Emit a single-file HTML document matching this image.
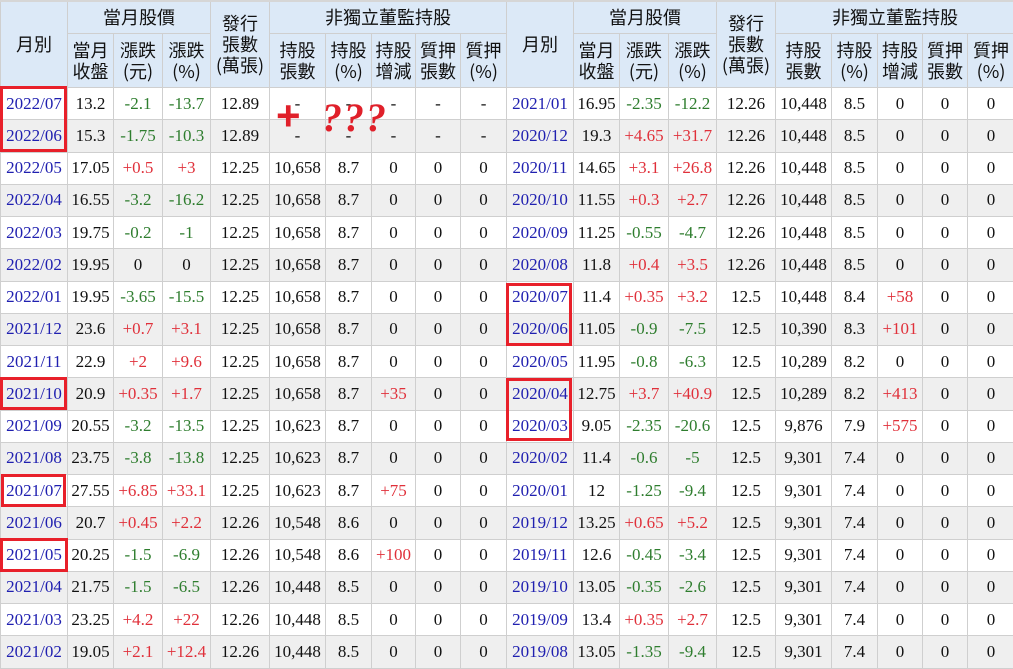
<!DOCTYPE html>
<html><head><meta charset="utf-8"><style>
body{margin:0;width:1013px;height:667px;overflow:hidden;background:#fff;position:relative;font-family:"Liberation Serif","Noto Serif CJK TC",serif;}
table{position:absolute;top:0;border-collapse:collapse;table-layout:fixed;font-size:17px;}
td,th{border:1px solid #cfcfcf;text-align:center;padding:0;white-space:nowrap;overflow:hidden;}
th{background:#dce9f7;font-family:"Noto Sans CJK TC","Noto Sans CJK SC",sans-serif;font-weight:400;font-size:18px;line-height:21px;color:#111;}
tr.h1 th{height:32px;}
tr.h2 th{height:53px;}
tbody tr{height:32.25px;}
tbody tr:nth-child(even) td{background:#efefef;}
td{color:#111;}
td.m{color:#2020b0;}
.g{color:#2e7d2e;}
.r{color:#e0303a;}
.box{position:absolute;border:3px solid #e8202a;box-sizing:border-box;}
.top{position:absolute;top:0;left:0;width:1013px;height:2px;background:#d6d6d6;}
</style></head><body>
<table style="left:0;width:506px">
<colgroup><col style="width:67px"><col style="width:46px"><col style="width:49px"><col style="width:48px"><col style="width:59px"><col style="width:56px"><col style="width:46px"><col style="width:44px"><col style="width:45px"><col style="width:46px"></colgroup>
<thead><tr class="h1"><th rowspan="2">月別</th><th colspan="3">當月股價</th><th rowspan="2">發行<br>張數<br>(萬張)</th><th colspan="5">非獨立董監持股</th></tr>
<tr class="h2"><th>當月<br>收盤</th><th>漲跌<br>(元)</th><th>漲跌<br>(%)</th><th>持股<br>張數</th><th>持股<br>(%)</th><th>持股<br>增減</th><th>質押<br>張數</th><th>質押<br>(%)</th></tr></thead>
<tbody>
<tr><td class="m">2022/07</td><td>13.2</td><td class="g">-2.1</td><td class="g">-13.7</td><td>12.89</td><td>-</td><td>-</td><td>-</td><td>-</td><td>-</td></tr>
<tr><td class="m">2022/06</td><td>15.3</td><td class="g">-1.75</td><td class="g">-10.3</td><td>12.89</td><td>-</td><td>-</td><td>-</td><td>-</td><td>-</td></tr>
<tr><td class="m">2022/05</td><td>17.05</td><td class="r">+0.5</td><td class="r">+3</td><td>12.25</td><td>10,658</td><td>8.7</td><td>0</td><td>0</td><td>0</td></tr>
<tr><td class="m">2022/04</td><td>16.55</td><td class="g">-3.2</td><td class="g">-16.2</td><td>12.25</td><td>10,658</td><td>8.7</td><td>0</td><td>0</td><td>0</td></tr>
<tr><td class="m">2022/03</td><td>19.75</td><td class="g">-0.2</td><td class="g">-1</td><td>12.25</td><td>10,658</td><td>8.7</td><td>0</td><td>0</td><td>0</td></tr>
<tr><td class="m">2022/02</td><td>19.95</td><td>0</td><td>0</td><td>12.25</td><td>10,658</td><td>8.7</td><td>0</td><td>0</td><td>0</td></tr>
<tr><td class="m">2022/01</td><td>19.95</td><td class="g">-3.65</td><td class="g">-15.5</td><td>12.25</td><td>10,658</td><td>8.7</td><td>0</td><td>0</td><td>0</td></tr>
<tr><td class="m">2021/12</td><td>23.6</td><td class="r">+0.7</td><td class="r">+3.1</td><td>12.25</td><td>10,658</td><td>8.7</td><td>0</td><td>0</td><td>0</td></tr>
<tr><td class="m">2021/11</td><td>22.9</td><td class="r">+2</td><td class="r">+9.6</td><td>12.25</td><td>10,658</td><td>8.7</td><td>0</td><td>0</td><td>0</td></tr>
<tr><td class="m">2021/10</td><td>20.9</td><td class="r">+0.35</td><td class="r">+1.7</td><td>12.25</td><td>10,658</td><td>8.7</td><td class="r">+35</td><td>0</td><td>0</td></tr>
<tr><td class="m">2021/09</td><td>20.55</td><td class="g">-3.2</td><td class="g">-13.5</td><td>12.25</td><td>10,623</td><td>8.7</td><td>0</td><td>0</td><td>0</td></tr>
<tr><td class="m">2021/08</td><td>23.75</td><td class="g">-3.8</td><td class="g">-13.8</td><td>12.25</td><td>10,623</td><td>8.7</td><td>0</td><td>0</td><td>0</td></tr>
<tr><td class="m">2021/07</td><td>27.55</td><td class="r">+6.85</td><td class="r">+33.1</td><td>12.25</td><td>10,623</td><td>8.7</td><td class="r">+75</td><td>0</td><td>0</td></tr>
<tr><td class="m">2021/06</td><td>20.7</td><td class="r">+0.45</td><td class="r">+2.2</td><td>12.26</td><td>10,548</td><td>8.6</td><td>0</td><td>0</td><td>0</td></tr>
<tr><td class="m">2021/05</td><td>20.25</td><td class="g">-1.5</td><td class="g">-6.9</td><td>12.26</td><td>10,548</td><td>8.6</td><td class="r">+100</td><td>0</td><td>0</td></tr>
<tr><td class="m">2021/04</td><td>21.75</td><td class="g">-1.5</td><td class="g">-6.5</td><td>12.26</td><td>10,448</td><td>8.5</td><td>0</td><td>0</td><td>0</td></tr>
<tr><td class="m">2021/03</td><td>23.25</td><td class="r">+4.2</td><td class="r">+22</td><td>12.26</td><td>10,448</td><td>8.5</td><td>0</td><td>0</td><td>0</td></tr>
<tr><td class="m">2021/02</td><td>19.05</td><td class="r">+2.1</td><td class="r">+12.4</td><td>12.26</td><td>10,448</td><td>8.5</td><td>0</td><td>0</td><td>0</td></tr>
</tbody></table>

<table style="left:506px;width:508px">
<colgroup><col style="width:67px"><col style="width:46px"><col style="width:49px"><col style="width:48px"><col style="width:59px"><col style="width:56px"><col style="width:46px"><col style="width:45px"><col style="width:45px"><col style="width:47px"></colgroup>
<thead><tr class="h1"><th rowspan="2">月別</th><th colspan="3">當月股價</th><th rowspan="2">發行<br>張數<br>(萬張)</th><th colspan="5">非獨立董監持股</th></tr>
<tr class="h2"><th>當月<br>收盤</th><th>漲跌<br>(元)</th><th>漲跌<br>(%)</th><th>持股<br>張數</th><th>持股<br>(%)</th><th>持股<br>增減</th><th>質押<br>張數</th><th>質押<br>(%)</th></tr></thead>
<tbody>
<tr><td class="m">2021/01</td><td>16.95</td><td class="g">-2.35</td><td class="g">-12.2</td><td>12.26</td><td>10,448</td><td>8.5</td><td>0</td><td>0</td><td>0</td></tr>
<tr><td class="m">2020/12</td><td>19.3</td><td class="r">+4.65</td><td class="r">+31.7</td><td>12.26</td><td>10,448</td><td>8.5</td><td>0</td><td>0</td><td>0</td></tr>
<tr><td class="m">2020/11</td><td>14.65</td><td class="r">+3.1</td><td class="r">+26.8</td><td>12.26</td><td>10,448</td><td>8.5</td><td>0</td><td>0</td><td>0</td></tr>
<tr><td class="m">2020/10</td><td>11.55</td><td class="r">+0.3</td><td class="r">+2.7</td><td>12.26</td><td>10,448</td><td>8.5</td><td>0</td><td>0</td><td>0</td></tr>
<tr><td class="m">2020/09</td><td>11.25</td><td class="g">-0.55</td><td class="g">-4.7</td><td>12.26</td><td>10,448</td><td>8.5</td><td>0</td><td>0</td><td>0</td></tr>
<tr><td class="m">2020/08</td><td>11.8</td><td class="r">+0.4</td><td class="r">+3.5</td><td>12.26</td><td>10,448</td><td>8.5</td><td>0</td><td>0</td><td>0</td></tr>
<tr><td class="m">2020/07</td><td>11.4</td><td class="r">+0.35</td><td class="r">+3.2</td><td>12.5</td><td>10,448</td><td>8.4</td><td class="r">+58</td><td>0</td><td>0</td></tr>
<tr><td class="m">2020/06</td><td>11.05</td><td class="g">-0.9</td><td class="g">-7.5</td><td>12.5</td><td>10,390</td><td>8.3</td><td class="r">+101</td><td>0</td><td>0</td></tr>
<tr><td class="m">2020/05</td><td>11.95</td><td class="g">-0.8</td><td class="g">-6.3</td><td>12.5</td><td>10,289</td><td>8.2</td><td>0</td><td>0</td><td>0</td></tr>
<tr><td class="m">2020/04</td><td>12.75</td><td class="r">+3.7</td><td class="r">+40.9</td><td>12.5</td><td>10,289</td><td>8.2</td><td class="r">+413</td><td>0</td><td>0</td></tr>
<tr><td class="m">2020/03</td><td>9.05</td><td class="g">-2.35</td><td class="g">-20.6</td><td>12.5</td><td>9,876</td><td>7.9</td><td class="r">+575</td><td>0</td><td>0</td></tr>
<tr><td class="m">2020/02</td><td>11.4</td><td class="g">-0.6</td><td class="g">-5</td><td>12.5</td><td>9,301</td><td>7.4</td><td>0</td><td>0</td><td>0</td></tr>
<tr><td class="m">2020/01</td><td>12</td><td class="g">-1.25</td><td class="g">-9.4</td><td>12.5</td><td>9,301</td><td>7.4</td><td>0</td><td>0</td><td>0</td></tr>
<tr><td class="m">2019/12</td><td>13.25</td><td class="r">+0.65</td><td class="r">+5.2</td><td>12.5</td><td>9,301</td><td>7.4</td><td>0</td><td>0</td><td>0</td></tr>
<tr><td class="m">2019/11</td><td>12.6</td><td class="g">-0.45</td><td class="g">-3.4</td><td>12.5</td><td>9,301</td><td>7.4</td><td>0</td><td>0</td><td>0</td></tr>
<tr><td class="m">2019/10</td><td>13.05</td><td class="g">-0.35</td><td class="g">-2.6</td><td>12.5</td><td>9,301</td><td>7.4</td><td>0</td><td>0</td><td>0</td></tr>
<tr><td class="m">2019/09</td><td>13.4</td><td class="r">+0.35</td><td class="r">+2.7</td><td>12.5</td><td>9,301</td><td>7.4</td><td>0</td><td>0</td><td>0</td></tr>
<tr><td class="m">2019/08</td><td>13.05</td><td class="g">-1.35</td><td class="g">-9.4</td><td>12.5</td><td>9,301</td><td>7.4</td><td>0</td><td>0</td><td>0</td></tr>
</tbody></table>

<div class="top"></div>
<div class="box" style="left:0;top:86px;width:67px;height:66px"></div>
<div class="box" style="left:0;top:377px;width:67px;height:33px"></div>
<div class="box" style="left:1px;top:474px;width:65px;height:33px"></div>
<div class="box" style="left:0;top:538px;width:68px;height:34px"></div>
<div class="box" style="left:506px;top:283px;width:66px;height:63px"></div>
<div class="box" style="left:506px;top:378px;width:66px;height:63px"></div>
<div style="position:absolute;left:276px;top:93px;color:#e0202a;font:bold 42px 'Liberation Sans',sans-serif;line-height:46px;">+</div>
<div style="position:absolute;left:322px;top:96px;color:#e0202a;font:bold italic 40px 'Liberation Serif',serif;letter-spacing:2px;line-height:44px;">???</div>
</body></html>
